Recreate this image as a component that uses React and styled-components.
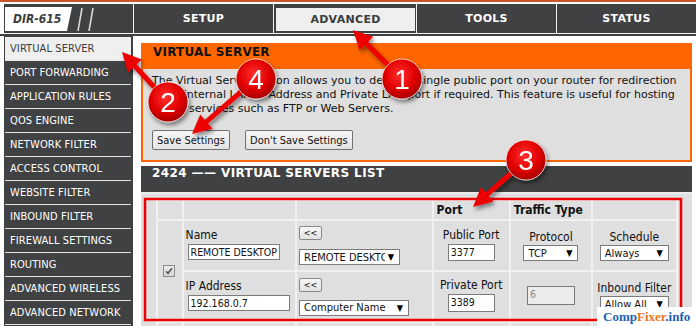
import React from 'react'
import styled, {createGlobalStyle} from 'styled-components'

const GlobalStyle = createGlobalStyle`
  html, body {
    margin: 0;
    padding: 0;
    background: #fff;
  }
  body {
    width: 696px;
    height: 326px;
    overflow: hidden;
  }
`

const FONT = `"DejaVu Sans Condensed", "DejaVu Sans", sans-serif`
const DARK = '#404142'
const ORANGE = '#ff6600'

const PageStl = styled.div`
  position: relative;
  width: 696px;
  height: 326px;
  overflow: hidden;
  box-sizing: border-box;
  border-top: 2px solid #c8562a;
  padding-top: 2px;
  background: #fff;
  font-family: ${FONT};
`

// top navigation
const NavStl = styled.div`
  display: flex;
  height: 29px;
  margin-left: 4px;
  background: ${DARK};
  border-bottom: 1px solid #f2f2f2;
`

const NavUnderlineStl = styled.div`
  height: 2px;
  background: ${DARK};
`

const LogoCellStl = styled.div`
  width: 129px;
  display: flex;
  align-items: flex-start;
  padding: 3px 0 0 1px;
  box-sizing: border-box;
`

const LogoBoxStl = styled.div`
  width: 67px;
  height: 24px;
  box-sizing: border-box;
  padding-left: 8px;
  display: flex;
  align-items: center;
  background: #fff;
  clip-path: polygon(0 0, 100% 0, 92.5% 100%, 0 100%);
  color: #3c3c3c;
  font: italic bold 12px ${FONT};
`

const TabStl = styled.div`
  flex: 1;
  display: flex;
  border-left: 1px solid #f2f2f2;
  padding: ${p => p.$active ? '4px 1px 2px 2px' : '0'};
`

const TabLabelStl = styled.div`
  flex: 1;
  display: flex;
  align-items: center;
  justify-content: center;
  background: ${p => p.$active ? '#efefef' : 'transparent'};
  color: ${p => p.$active ? '#3c3c3c' : '#fff'};
  font: bold 11px "DejaVu Sans", sans-serif;
  letter-spacing: 0.3px;
`

// body
const BodyStl = styled.div`
  display: flex;
  align-items: flex-start;
`

const SidebarStl = styled.div`
  width: 129px;
  margin-left: 4px;
  padding: 1px 2px 0 1px;
  box-sizing: border-box;
  background: ${DARK};
  height: 300px;
`

const MenuItemStl = styled.div`
  height: 23px;
  line-height: 23px;
  padding-left: 5px;
  border-bottom: 1px solid #e6e6e6;
  background: ${p => p.$active ? '#efefef' : 'transparent'};
  color: ${p => p.$active ? '#3c3c3c' : '#fff'};
  font-size: 11px;
  letter-spacing: 0.1px;
  white-space: nowrap;
`

const MainStl = styled.div`
  width: 551px;
  margin: 7px 0 0 8px;
`

const PanelStl = styled.div`
  border: 2px solid ${ORANGE};
  background: #dfdfdf;
`

const PanelHeadStl = styled.div`
  height: 24px;
  line-height: 24px;
  padding-left: 10px;
  background: ${ORANGE};
  color: #111;
  font: bold 12px "DejaVu Sans", sans-serif;
  letter-spacing: 0.2px;
`

const PanelBodyStl = styled.div`
  padding: 5px 10px 10px 9px;
`

const DescStl = styled.p`
  margin: 0;
  font: 11px "DejaVu Sans", sans-serif;
  line-height: 14px;
  color: #111;
  white-space: nowrap;
`

const ButtonRowStl = styled.div`
  display: flex;
  gap: 15px;
  margin-top: 14px;
`

const ButtonStl = styled.button`
  height: 20px;
  padding: 0 4px;
  border: 1px solid #707070;
  border-radius: 2px;
  background: linear-gradient(#f6f6f6, #e3e3e3);
  color: #111;
  font: 11px ${FONT};
`

const ListStl = styled.div`
  margin-top: 4px;
  background: #dfdfdf;
  height: 200px;
`

const ListHeadStl = styled.div`
  height: 26px;
  line-height: 26px;
  padding-left: 11px;
  background: ${DARK};
  color: #fff;
  font: bold 12px "DejaVu Sans", sans-serif;
  letter-spacing: 0.4px;
`

const ListBodyStl = styled.div`
  padding-top: 5px;
  border-top: 2px solid #ececec;
`

const TableStl = styled.table`
  table-layout: fixed;
  border-collapse: separate;
  border-spacing: 2px;
  margin: 0 auto;
  width: 522px;
  background: #f1f1f1;
  font-family: ${FONT};
  font-size: 12px;
  color: #111;
`

const TdStl = styled.td`
  height: ${p => p.$h}px;
  padding: 0 0 0 ${p => p.$pl || 0}px;
  background: #dfdfdf;
  text-align: ${p => p.$center ? 'center' : 'left'};
  vertical-align: middle;
`

const HeadTextStl = styled.span`
  font: bold 12px ${FONT};
  padding-left: 1px;
`

const LabelStl = styled.div`
  line-height: 14px;
  margin-bottom: ${p => p.$gap ?? 2}px;
  white-space: nowrap;
`

const InputStl = styled.div`
  display: inline-block;
  box-sizing: border-box;
  width: ${p => p.$w}px;
  height: ${p => p.$h || 17}px;
  padding-left: 2px;
  margin-left: ${p => p.$ml || 0}px;
  border: 1px solid #7b7b7b;
  background: ${p => p.$disabled ? '#ececec' : '#fff'};
  color: ${p => p.$disabled ? '#888' : '#111'};
  font-size: 10.5px;
  line-height: 15px;
  text-align: left;
  white-space: nowrap;
  overflow: hidden;
`

const SelectStl = styled.div`
  display: inline-flex;
  align-items: center;
  box-sizing: border-box;
  width: ${p => p.$w}px;
  height: 16px;
  padding: 0 5px 0 4px;
  border: 1px solid #7b7b7b;
  background: #fff;
  font-size: 11px;
  text-align: left;
  vertical-align: top;
`

const SelectTextStl = styled.span`
  flex: 1;
  min-width: 0;
  overflow: hidden;
  white-space: nowrap;
`

const CaretStl = styled.span`
  flex: none;
  margin-left: 3px;
  font-size: 9px;
  color: #000;
`

const SmallBtnStl = styled.div`
  width: 23px;
  height: 14px;
  box-sizing: border-box;
  border: 1px solid #8a8a8a;
  border-radius: 2px;
  background: linear-gradient(#f7f7f7, #e2e2e2);
  font: 9px ${FONT};
  line-height: 12px;
  text-align: center;
  margin-bottom: ${p => p.$gap || 0}px;
`

const CheckStl = styled.div`
  width: 12px;
  height: 12px;
  margin-left: 5px;
  box-sizing: border-box;
  border: 1px solid #8c8c8c;
  background: linear-gradient(#ececec, #d6d6d6);
  display: flex;
  align-items: center;
  justify-content: center;
`

const OverlayStl = styled.svg`
  position: absolute;
  left: 0;
  top: 0;
  pointer-events: none;
`

const WatermarkStl = styled.div`
  position: absolute;
  right: 0;
  bottom: 0;
  width: 99px;
  height: 19px;
  box-sizing: border-box;
  padding-left: 6px;
  background: #fff;
  font: bold 13px "Liberation Serif", serif;
  line-height: 19px;
  color: #1c5fb5;
`

const OrangeSpanStl = styled.span`
  color: #ee7420;
`

const Select = ({w, children}) => (
  <SelectStl $w={w}>
    <SelectTextStl>{children}</SelectTextStl>
    <CaretStl>▼</CaretStl>
  </SelectStl>
)

const menu = [
  'VIRTUAL SERVER', 'PORT FORWARDING', 'APPLICATION RULES', 'QOS ENGINE',
  'NETWORK FILTER', 'ACCESS CONTROL', 'WEBSITE FILTER', 'INBOUND FILTER',
  'FIREWALL SETTINGS', 'ROUTING', 'ADVANCED WIRELESS', 'ADVANCED NETWORK',
]

const tabs = ['SETUP', 'ADVANCED', 'TOOLS', 'STATUS']

const arrowPoints = (x1, y1, x2, y2, w = 5, hl = 19, hw = 19) => {
  const len = Math.hypot(x2 - x1, y2 - y1)
  const ux = (x2 - x1) / len, uy = (y2 - y1) / len
  const px = -uy, py = ux
  const bx = x2 - ux * hl, by = y2 - uy * hl
  const pts = [
    [x1 + px * w / 2, y1 + py * w / 2],
    [bx + px * w / 2, by + py * w / 2],
    [bx + px * hw / 2, by + py * hw / 2],
    [x2, y2],
    [bx - px * hw / 2, by - py * hw / 2],
    [bx - px * w / 2, by - py * w / 2],
    [x1 - px * w / 2, y1 - py * w / 2],
  ]
  return pts.map(p => p.map(v => v.toFixed(1)).join(',')).join(' ')
}

const marks = [
  {n: '1', cx: 402, cy: 77, tx: 353, ty: 28},
  {n: '2', cx: 168, cy: 100, tx: 122, ty: 50},
  {n: '3', cx: 526, cy: 158, tx: 473, ty: 205},
  {n: '4', cx: 256, cy: 77, tx: 192, ty: 132},
]

const Annotations = () => (
  <OverlayStl width="696" height="326" viewBox="0 0 696 326">
    <defs>
      <radialGradient id="ball" cx="45%" cy="38%" r="62%">
        <stop offset="0" stopColor="#ff3030" />
        <stop offset="0.6" stopColor="#e30000" />
        <stop offset="1" stopColor="#a80000" />
      </radialGradient>
      <filter id="shadow" x="-30%" y="-30%" width="160%" height="160%">
        <feDropShadow dx="2" dy="3" stdDeviation="2" floodColor="#000" floodOpacity="0.45" />
      </filter>
    </defs>
    <rect x="145" y="197" width="536" height="121" fill="none" stroke="#f00000" strokeWidth="2.5" />
    {marks.map(m => (
      <g key={m.n} filter="url(#shadow)">
        <polygon points={arrowPoints(m.cx, m.cy, m.tx, m.ty)} fill="#ee0000" />
        <circle cx={m.cx} cy={m.cy} r="20" fill="url(#ball)" stroke="#fff" strokeOpacity="0.7" strokeWidth="1" />
        <text x={m.cx} y={m.cy + 10} textAnchor="middle" fill="#fff"
              fontFamily='"Liberation Sans", Arial, sans-serif' fontSize="28">{m.n}</text>
      </g>
    ))}
  </OverlayStl>
)

export default function App() {
  return (
    <PageStl>
      <GlobalStyle />
      <NavStl>
        <LogoCellStl>
          <LogoBoxStl>DIR-615</LogoBoxStl>
          <svg width="24" height="24" viewBox="0 0 24 24">
            <line x1="10" y1="1" x2="6" y2="24" stroke="#d8d8d8" strokeWidth="1.6" />
            <line x1="21" y1="1" x2="17" y2="24" stroke="#d8d8d8" strokeWidth="1.6" />
          </svg>
        </LogoCellStl>
        {tabs.map(t => (
          <TabStl key={t} $active={t === 'ADVANCED'}>
            <TabLabelStl $active={t === 'ADVANCED'}>{t}</TabLabelStl>
          </TabStl>
        ))}
      </NavStl>
      <NavUnderlineStl />

      <BodyStl>
        <SidebarStl>
          {menu.map((m, i) => (
            <MenuItemStl key={m} $active={i === 0}>{m}</MenuItemStl>
          ))}
        </SidebarStl>

        <MainStl>
          <PanelStl>
            <PanelHeadStl>VIRTUAL SERVER</PanelHeadStl>
            <PanelBodyStl>
              <DescStl>
                The Virtual Server option allows you to define a single public port on your router for redirection<br />
                to an internal LAN IP Address and Private LAN port if required. This feature is useful for hosting<br />
                online services such as FTP or Web Servers.
              </DescStl>
              <ButtonRowStl>
                <ButtonStl>Save Settings</ButtonStl>
                <ButtonStl>Don't Save Settings</ButtonStl>
              </ButtonRowStl>
            </PanelBodyStl>
          </PanelStl>

          <ListStl>
            <ListHeadStl>2424 —— VIRTUAL SERVERS LIST</ListHeadStl>
            <ListBodyStl>
              <TableStl>
                <colgroup>
                  <col style={{width: 24}} />
                  <col style={{width: 111}} />
                  <col style={{width: 134}} />
                  <col style={{width: 75}} />
                  <col style={{width: 80}} />
                  <col style={{width: 82}} />
                </colgroup>
                <tbody>
                  <tr>
                    <TdStl $h={18} />
                    <TdStl $h={18} />
                    <TdStl $h={18} />
                    <TdStl $h={18} $pl={2}><HeadTextStl>Port</HeadTextStl></TdStl>
                    <TdStl $h={18} $pl={2}><HeadTextStl>Traffic Type</HeadTextStl></TdStl>
                    <TdStl $h={18} />
                  </tr>
                  <tr>
                    <TdStl rowSpan={2}>
                      <CheckStl>
                        <svg width="8" height="8" viewBox="0 0 8 8">
                          <path d="M1 4.2 L3 6.3 L7 1.3" fill="none" stroke="#555" strokeWidth="1.6" />
                        </svg>
                      </CheckStl>
                    </TdStl>
                    <TdStl $h={49} $pl={2}>
                      <LabelStl>Name</LabelStl>
                      <InputStl $w={92} $h={16} $ml={2}>REMOTE DESKTOP</InputStl>
                    </TdStl>
                    <TdStl $h={49} $pl={2}>
                      <SmallBtnStl $gap={9}>&lt;&lt;</SmallBtnStl>
                      <Select w={101}>REMOTE DESKTOP</Select>
                    </TdStl>
                    <TdStl $h={49} $center>
                      <LabelStl>Public Port</LabelStl>
                      <InputStl $w={47}>3377</InputStl>
                    </TdStl>
                    <TdStl $h={49} $center>
                      <LabelStl $gap={1}>Protocol</LabelStl>
                      <Select w={55}>TCP</Select>
                    </TdStl>
                    <TdStl $h={49} $center>
                      <LabelStl $gap={1}>Schedule</LabelStl>
                      <Select w={69}>Always</Select>
                    </TdStl>
                  </tr>
                  <tr>
                    <TdStl $h={49} $pl={2}>
                      <LabelStl>IP Address</LabelStl>
                      <InputStl $w={102} $h={16} $ml={2}>192.168.0.7</InputStl>
                    </TdStl>
                    <TdStl $h={49} $pl={2}>
                      <SmallBtnStl $gap={8}>&lt;&lt;</SmallBtnStl>
                      <Select w={110}>Computer Name</Select>
                    </TdStl>
                    <TdStl $h={49} $center>
                      <LabelStl>Private Port</LabelStl>
                      <InputStl $w={47} $h={18}>3389</InputStl>
                    </TdStl>
                    <TdStl $h={49} $center>
                      <InputStl $w={48} $h={19} $disabled>6</InputStl>
                    </TdStl>
                    <TdStl $h={49} $center>
                      <LabelStl $gap={1}>Inbound Filter</LabelStl>
                      <Select w={69}>Allow All</Select>
                    </TdStl>
                  </tr>
                  <tr>
                    <TdStl $h={49} />
                    <TdStl $h={49} />
                    <TdStl $h={49} />
                    <TdStl $h={49} />
                    <TdStl $h={49} />
                    <TdStl $h={49} />
                  </tr>
                </tbody>
              </TableStl>
            </ListBodyStl>
          </ListStl>
        </MainStl>
      </BodyStl>

      <Annotations />
      <WatermarkStl>Comp<OrangeSpanStl>Fixer</OrangeSpanStl>.info</WatermarkStl>
    </PageStl>
  )
}
